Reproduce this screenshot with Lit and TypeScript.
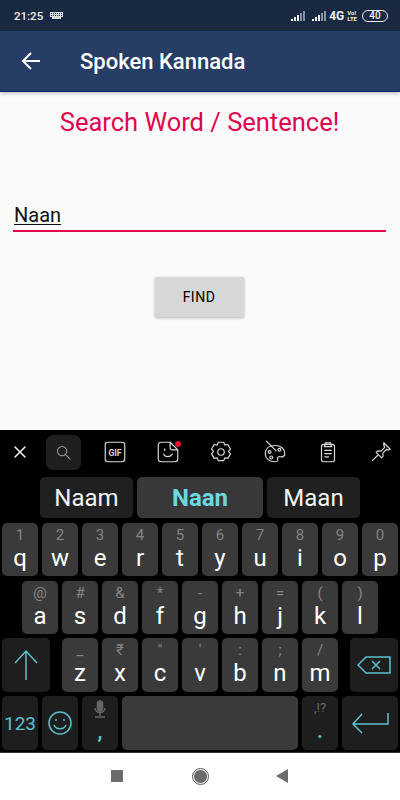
import { LitElement, css, html, svg } from "lit";
import { customElement } from "lit/decorators.js";

type KeyDef = { main: string; hint: string };

const ROW_1: KeyDef[] = [
  { main: "q", hint: "1" },
  { main: "w", hint: "2" },
  { main: "e", hint: "3" },
  { main: "r", hint: "4" },
  { main: "t", hint: "5" },
  { main: "y", hint: "6" },
  { main: "u", hint: "7" },
  { main: "i", hint: "8" },
  { main: "o", hint: "9" },
  { main: "p", hint: "0" },
];

const ROW_2: KeyDef[] = [
  { main: "a", hint: "@" },
  { main: "s", hint: "#" },
  { main: "d", hint: "&" },
  { main: "f", hint: "*" },
  { main: "g", hint: "-" },
  { main: "h", hint: "+" },
  { main: "j", hint: "=" },
  { main: "k", hint: "(" },
  { main: "l", hint: ")" },
];

const ROW_3: KeyDef[] = [
  { main: "z", hint: "_" },
  { main: "x", hint: "₹" },
  { main: "c", hint: '"' },
  { main: "v", hint: "'" },
  { main: "b", hint: ":" },
  { main: "n", hint: ";" },
  { main: "m", hint: "/" },
];

const TOOL_ICONS = [
  svg`<rect x="3" y="3" width="18" height="18" rx="2.5"/><text x="12" y="15.5" text-anchor="middle" class="gif">GIF</text>`,
  svg`<path d="M14 3H6a3 3 0 0 0-3 3v12a3 3 0 0 0 3 3h12a3 3 0 0 0 3-3v-8l-7-7v5a2 2 0 0 0 2 2h5"/><path d="M8 14c1 3 6 3 8 0"/><path d="M9 9v1.5"/>`,
  svg`<path d="M9.5 3h5l1 2.6 2.8-.5 2.4 4.2-1.8 2.2 1.8 2.2-2.4 4.2-2.8-.5-1 2.6h-5l-1-2.6-2.8.5-2.4-4.2 1.8-2.2-1.800-2.200 2.400-4.200 2.800.5z"/><circle cx="12" cy="12" r="3"/>`,
  svg`<path d="M12 6c5.500 0 9 3.200 9 7.500 0 2.500-2 3.300-4 2.900-2-.4-3 .6-2.500 2.100.5 1.700-.5 2.500-2.500 2.500-5.500 0-9-3.300-9-7.700S6.500 6 12 6z"/><path d="M4 2l9 9"/><circle cx="7" cy="12" r="1.300"/><circle cx="8.500" cy="17" r="1.300"/><circle cx="16" cy="10" r="1.300"/>`,
  svg`<rect x="6" y="5" width="12" height="16" rx="2"/><path d="M9.500 5V3.500h5V5l1 2h-7z"/><path d="M9 10.500h6M9 13.500h6M9 16.500h3.500"/>`,
  svg`<path d="M14.500 3.500l6 6-1.800.8-1.500-.8-3.500 3.500.2 3-1.400 1.400-5-5 1.400-1.400 3 .2 3.500-3.500-.7-1.500z"/><path d="M8.800 15.200L4 20"/>`,
];

@customElement("app-root")
export class AppRoot extends LitElement {
  static styles = css`
    :host {
      display: flex;
      flex-direction: column;
      width: 400px;
      height: 800px;
      overflow: hidden;
      font-family: Roboto, "Liberation Sans", sans-serif;
      background: #fafafa;
    }
    .status {
      height: 31px;
      flex-shrink: 0;
      display: flex;
      align-items: center;
      padding: 0 14px;
      background: #1a2942;
      color: #eef0f3;
      font-size: 11px;
      font-weight: 500;
    }
    .status .time {
      font-size: 11.5px;
      margin-right: 7px;
    }
    .status .right {
      margin-left: auto;
      display: flex;
      align-items: center;
      gap: 3px;
    }
    .status .net {
      font-size: 12px;
      font-weight: 700;
    }
    .status .volte {
      display: flex;
      flex-direction: column;
      font-size: 6px;
      line-height: 6px;
      font-weight: 700;
    }
    .battery {
      margin-left: 2px;
      width: 24px;
      height: 10px;
      box-sizing: content-box;
      border: 1px solid #eef0f3;
      border-radius: 6px;
      font-size: 10px;
      line-height: 10px;
      text-align: center;
      margin-right: -2px;
    }
    .appbar {
      height: 61px;
      flex-shrink: 0;
      display: flex;
      align-items: center;
      box-sizing: border-box;
      padding-left: 21px;
      background: #263d65;
      border-bottom: 1px solid #0c2460;
      box-shadow: 0 1px 4px rgba(0, 0, 0, 0.3);
      color: #fff;
      position: relative;
    }
    .appbar svg {
      width: 20px;
      height: 20px;
    }
    .appbar .title {
      margin-left: 39px;
      font-size: 22px;
      font-weight: 500;
    }
    .content {
      height: 338px;
      flex-shrink: 0;
      box-sizing: border-box;
      padding: 14px 14px 0 13px;
      display: flex;
      flex-direction: column;
      align-items: center;
    }
    .heading {
      color: #e0064f;
      font-size: 25.5px;
      line-height: 32px;
      white-space: nowrap;
    }
    .field {
      margin-top: 58px;
      align-self: stretch;
      height: 36px;
      box-sizing: border-box;
      border-bottom: 2px solid #e6084f;
      font-size: 20px;
      line-height: 26px;
      color: #111;
      padding: 6px 0 0 1px;
    }
    .field span {
      text-decoration: underline;
      text-decoration-thickness: 1px;
      text-underline-offset: 2px;
    }
    .find {
      margin-top: 45px;
      width: 89px;
      height: 40px;
      margin-left: -1px;
      border: none;
      border-radius: 2px;
      background: #d6d7d7;
      box-shadow: 0 1px 3px rgba(0, 0, 0, 0.3);
      color: #000;
      font: 400 14px Roboto, sans-serif;
      letter-spacing: 0.5px;
    }
    .keyboard {
      height: 322px;
      flex-shrink: 0;
      box-sizing: border-box;
      background: #000;
      display: flex;
      flex-direction: column;
    }
    .tools {
      height: 47px;
      display: flex;
      align-items: center;
      padding: 0 0 3px 0;
      box-sizing: border-box;
      position: relative;
    }
    .tools svg {
      fill: none;
      stroke: #d8d8d8;
      stroke-width: 1.1;
      stroke-linejoin: round;
      stroke-linecap: round;
      flex-shrink: 0;
    }
    .tools .gif {
      fill: #d8d8d8;
      stroke: none;
      font: 700 8px Roboto, sans-serif;
    }
    .tool {
      width: 53.2px;
      flex-shrink: 0;
      display: flex;
      justify-content: center;
      position: relative;
    }
    .tool svg {
      width: 26px;
      height: 26px;
    }
    .close {
      width: 46px;
      flex-shrink: 0;
      padding-right: 6px;
      box-sizing: border-box;
      display: flex;
      justify-content: center;
    }
    .close svg {
      width: 14px;
      height: 14px;
      stroke: #eee;
      stroke-width: 1.6;
    }
    .search {
      width: 35px;
      height: 35px;
      flex-shrink: 0;
      margin-right: 7.5px;
      border-radius: 7px;
      background: #1f1f1f;
      display: flex;
      align-items: center;
      justify-content: center;
    }
    .search svg {
      width: 15px;
      height: 15px;
      stroke: #999;
    }
    .dot {
      position: absolute;
      top: 2px;
      left: 33.5px;
      width: 6px;
      height: 6px;
      border-radius: 50%;
      background: #e2102f;
    }
    .suggest {
      display: flex;
      justify-content: center;
      gap: 4px;
      height: 41px;
    }
    .sug {
      width: 93px;
      border-radius: 5px;
      background: #202020;
      color: #f4f4f4;
      font-size: 24px;
      display: flex;
      align-items: center;
      justify-content: center;
    }
    .sug.active {
      width: 126px;
      background: #383838;
      color: #6dd6e2;
      font-weight: 700;
    }
    .rows {
      margin-top: 5px;
      display: flex;
      flex-direction: column;
      gap: 4px;
      padding: 0 2px;
    }
    .row {
      display: flex;
      gap: 4px;
      height: 54px;
    }
    .row.top {
      height: 53px;
      margin-bottom: 1px;
    }
    .row.second {
      height: 53px;
      padding-left: 20px;
    }
    .key {
      width: 36px;
      flex-shrink: 0;
      box-sizing: border-box;
      position: relative;
      border-radius: 5px;
      background: #3a3a3a;
      display: flex;
      align-items: center;
      justify-content: center;
      color: #fff;
    }
    .key.dark {
      background: #1e1e1e;
    }
    .hint {
      position: absolute;
      top: 3px;
      left: 0;
      right: 0;
      text-align: center;
      font-size: 15px;
      line-height: 18px;
      color: #858585;
    }
    .main {
      position: absolute;
      top: 21px;
      left: 0;
      right: 0;
      text-align: center;
      font-size: 24px;
      line-height: 28px;
    }
    .key svg {
      fill: none;
      stroke: #5cc0cf;
      stroke-width: 1.5;
    }
    .key svg.mic {
      position: absolute;
      top: 4px;
      stroke: #666;
    }
    .mic rect {
      fill: #666;
    }
    .shift {
      width: 48px;
      margin-right: 8px;
    }
    .back {
      width: 48px;
      margin-left: 8px;
    }
    .num {
      color: #5cc0cf;
      font-size: 19px;
    }
    .space {
      width: 176px;
    }
    .enter {
      width: 56px;
    }
    .punct {
      color: #5cc0cf;
      font-size: 20px;
      font-weight: 700;
    }
    .hint.small {
      font-size: 13px;
      color: #6a6a6a;
    }
    .nav {
      flex: 1;
      background: #fff;
      display: flex;
      align-items: center;
      padding-left: 111px;
      padding-bottom: 1px;
      border-top: 1px solid #333;
      box-sizing: border-box;
    }
    .stop {
      width: 12px;
      height: 12px;
      background: #6b6b6b;
    }
    .home {
      margin-left: 70px;
      width: 15px;
      height: 15px;
      border-radius: 50%;
      background: #6b6b6b;
      border: 1px solid #fff;
      outline: 1.5px solid #555;
      box-sizing: border-box;
    }
    .back-nav {
      margin-left: 68px;
      width: 12px;
      height: 14px;
    }
  `;

  private renderKey(k: KeyDef) {
    return html`<div class="key">
      <span class="hint">${k.hint}</span>
      <span class="main">${k.main}</span>
    </div>`;
  }

  render() {
    return html`
      <div class="status">
        <span class="time">21:25</span>
        <svg width="13" height="7" viewBox="0 0 13 7" fill="#d8dade">
          <path d="M0 0h13v5h-2v2H2V5H0zM1 1v1h1V1zm2 0v1h1V1zm2 0v1h1V1zm2 0v1h1V1zm2 0v1h1V1zm2 0v1h1V1zM1 3v1h1V3zm2 0v1h1V3zm2 0v1h1V3zm2 0v1h1V3zm2 0v1h1V3zm2 0v1h1V3z" fill-rule="evenodd"/>
        </svg>
        <div class="right">
          ${[0, 1].map(
            (i) => html`<svg
              width="14"
              height="10"
              viewBox="0 0 14 10"
              style=${i ? "margin-left:3px" : "margin-right:1px"}
            >
              <path d="M0 8h2v2H0zM3 6h2v4H3zM6 4h2v6H6z" fill="#eef0f3" />
              <path d="M9 2h2v8H9zM12 0h2v10h-2z" fill="#8b93a1" />
            </svg>`,
          )}
          <span class="net">4G</span>
          <span class="volte"><span>Vo!</span><span>LTE</span></span>
          <span class="battery">40</span>
        </div>
      </div>
      <div class="appbar">
        <svg viewBox="0 0 20 20" fill="none" stroke="#fff" stroke-width="2">
          <path d="M19 10H2M10 2l-8 8 8 8" />
        </svg>
        <span class="title">Spoken Kannada</span>
      </div>
      <div class="content">
        <div class="heading">Search Word / Sentence!</div>
        <div class="field"><span>Naan</span></div>
        <button class="find">FIND</button>
      </div>
      <div class="keyboard">
        <div class="tools">
          <div class="close">
            <svg viewBox="0 0 14 14"><path d="M2 2l10 10M12 2L2 12" /></svg>
          </div>
          <div class="search">
            <svg viewBox="0 0 16 16">
              <circle cx="6.5" cy="6.5" r="5" /><path d="M10.5 10.5L15 15" />
            </svg>
          </div>
          ${TOOL_ICONS.map(
            (icon, i) => html`<div class="tool">
              <svg viewBox="0 0 24 24">${icon}</svg>
              ${i === 1 ? html`<span class="dot"></span>` : null}
            </div>`,
          )}
        </div>
        <div class="suggest">
          <div class="sug">Naam</div>
          <div class="sug active">Naan</div>
          <div class="sug">Maan</div>
        </div>
        <div class="rows">
          <div class="row top">${ROW_1.map((k) => this.renderKey(k))}</div>
          <div class="row second">${ROW_2.map((k) => this.renderKey(k))}</div>
          <div class="row">
            <div class="key dark shift">
              <svg width="24" height="32" viewBox="0 0 24 32">
                <path d="M12 31V2M1 14L12 2l11 12" />
              </svg>
            </div>
            ${ROW_3.map((k) => this.renderKey(k))}
            <div class="key dark back">
              <svg width="34" height="18" viewBox="0 0 34 18">
                <path d="M33 1H9L1 9l8 8h24zM15 5l8 8M23 5l-8 8" />
              </svg>
            </div>
          </div>
          <div class="row">
            <div class="key dark num">123</div>
            <div class="key dark">
              <svg width="24" height="24" viewBox="0 0 24 24">
                <circle cx="12" cy="12" r="11" />
                <path d="M6 14c2 5 10 5 12 0" />
                <path d="M8 8v2M16 8v2" />
              </svg>
            </div>
            <div class="key dark">
              <svg class="mic" width="12" height="18" viewBox="0 0 12 18">
                <rect x="3.5" y="1" width="5" height="10" rx="2.5" />
                <path d="M1 8c0 6 10 6 10 0M6 13v3M1 17h10" />
              </svg>
              <span class="main punct">,</span>
            </div>
            <div class="key space"></div>
            <div class="key dark">
              <span class="hint small">,!?</span>
              <span class="main punct">.</span>
            </div>
            <div class="key dark enter">
              <svg width="38" height="22" viewBox="0 0 38 22">
                <path d="M37 1v11H2M11 2L2 12l9 9" />
              </svg>
            </div>
          </div>
        </div>
      </div>
      <div class="nav">
        <div class="stop"></div>
        <div class="home"></div>
        <svg class="back-nav" viewBox="0 0 12 14">
          <path d="M0 7l12-7v14z" fill="#6b6b6b" />
        </svg>
      </div>
    `;
  }
}
